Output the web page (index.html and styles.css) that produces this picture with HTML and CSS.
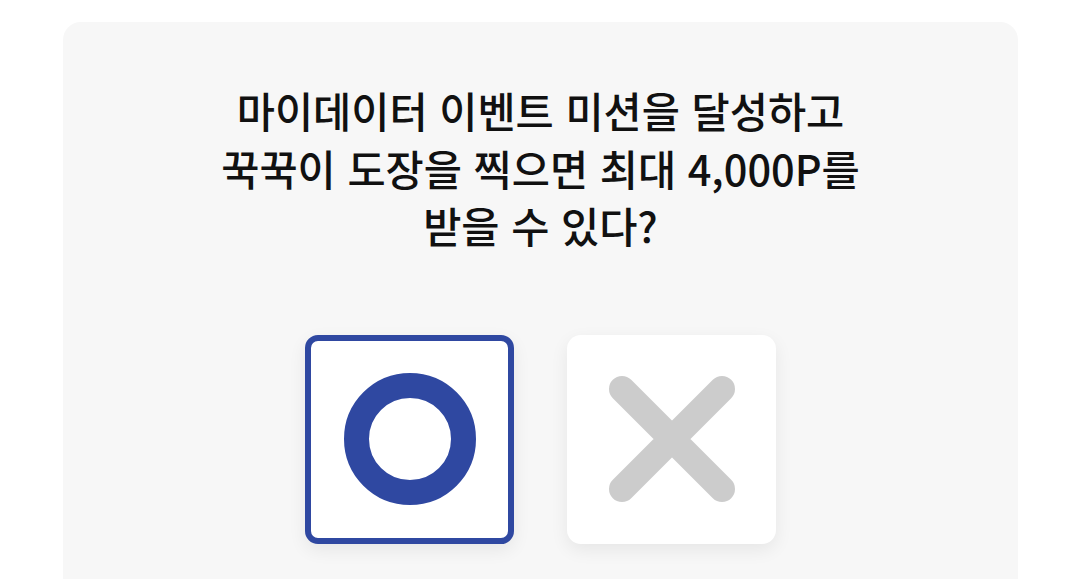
FILE: index.html
```html
<!DOCTYPE html>
<html lang="ko">
<head>
<meta charset="utf-8">
<link rel="stylesheet" href="styles.css">
</head>
<body>
<div class="card">
  <p class="question">마이데이터 이벤트 미션을 달성하고<br>꾹꾹이 도장을 찍으면 최대 4,000P를<br>받을 수 있다?</p>
  <div class="choices">
    <button class="choice choice-o selected" type="button" aria-label="O">
      <svg width="132" height="132" viewBox="0 0 132 132"><circle cx="66" cy="66" r="53.5" fill="none" stroke="#2f48a1" stroke-width="25"/></svg>
    </button>
    <button class="choice choice-x" type="button" aria-label="X">
      <svg width="140" height="140" viewBox="0 0 140 140"><path d="M20 20 L120 120 M120 20 L20 120" stroke="#cccccc" stroke-width="26" stroke-linecap="round" fill="none"/></svg>
    </button>
  </div>
</div>
</body>
</html>
```

FILE: styles.css
```css
html, body {
  margin: 0;
  padding: 0;
  background: #ffffff;
  height: 100%;
  overflow: hidden;
}
body {
  font-family: "Noto Sans CJK KR", "Noto Sans", sans-serif;
}
.card {
  margin: 22px 62px 0 63px;
  background: #f7f7f7;
  border-radius: 18px;
  height: 600px;
  padding-top: 60px;
  box-sizing: border-box;
}
.question {
  margin: 0;
  text-align: center;
  font-size: 41.5px;
  line-height: 57.5px;
  font-weight: 500;
  color: #111111;
  letter-spacing: 0;
}
.choices {
  display: flex;
  justify-content: center;
  gap: 53px;
  margin-top: 80px;
}
.choice {
  width: 209px;
  height: 209px;
  background: #ffffff;
  border: 0;
  border-radius: 14px;
  box-shadow: 0 6px 18px rgba(0, 0, 0, 0.07);
  display: flex;
  align-items: center;
  justify-content: center;
  padding: 0;
  box-sizing: border-box;
}
.choice.selected {
  border: 6px solid #2f48a1;
  border-radius: 13px;
}
.choice svg {
  display: block;
}
```
